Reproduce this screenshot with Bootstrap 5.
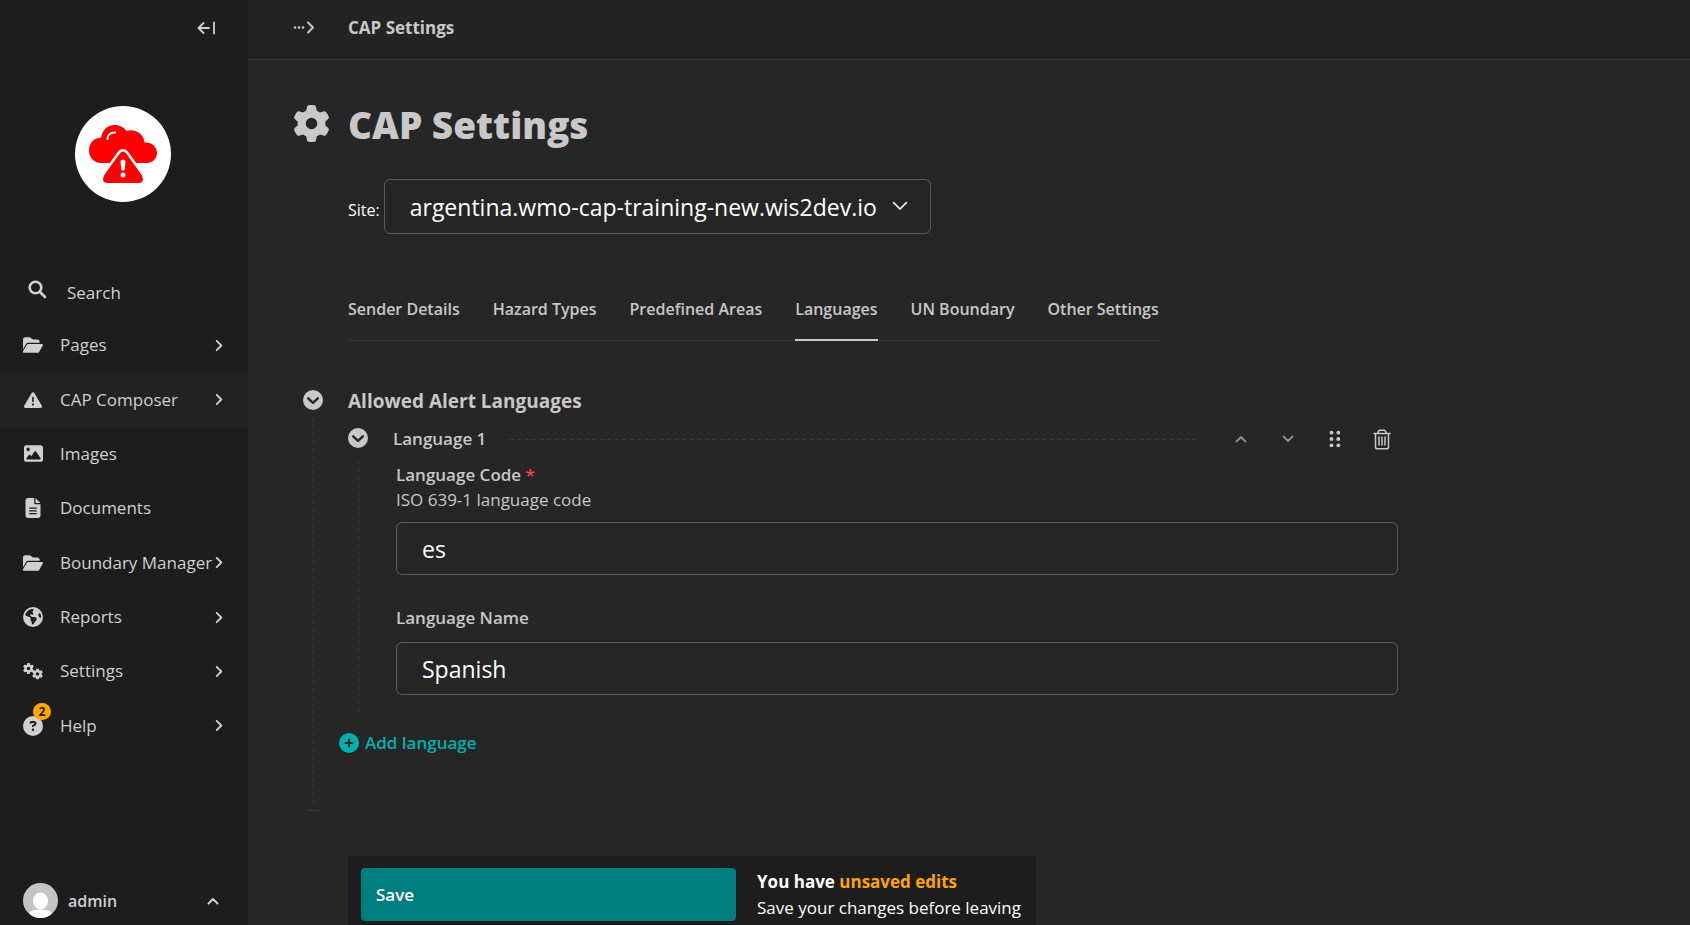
<!DOCTYPE html>
<html lang="en" data-bs-theme="dark">
<head>
<meta charset="utf-8">
<meta name="viewport" content="width=device-width, initial-scale=1">
<title>CAP Settings</title>
<link href="https://cdn.jsdelivr.net/npm/bootstrap@5.3.0/dist/css/bootstrap.min.css" rel="stylesheet">
<style>
  :root { --ink: #c8c8c8; --line: #333; --dash: #363636; --field: #5c5c5c; --panel: #1d1d1d; --teal: #007d7e; --teal-light: #00b0b1; --warn: #ffa500; }
  body { background: #262626; color: var(--ink); font-family: "Segoe UI", "Open Sans", "Noto Sans", sans-serif; font-size: 17px; line-height: 24px; }
  a, a:hover { color: inherit; text-decoration: none; }
  h1, h2, h3 { color: inherit; }
  svg { fill: currentColor; display: block; flex-shrink: 0; }
  .stroked { fill: none; stroke: currentColor; stroke-linecap: round; stroke-linejoin: round; }
  .bare { background: none; border: 0; padding: 0; color: inherit; }

  .side { width: 248px; background: var(--panel); color: #d0d0d0; }
  .side-top { height: 56px; padding-right: 31px; }
  .brand { width: 96px; height: 96px; margin: 50px 0 0 75px; }
  .side-search { margin-top: 66px; height: 50px; padding-left: 28px; gap: 20px; }
  .side-search svg { margin-bottom: 8px; }
  .side-menu { min-height: 435px; }
  .side-menu a { padding: 0 25px 0 22px; gap: 16px; height: 100%; white-space: nowrap; }
  .side-menu a > span { min-width: 0; }
  .side-menu .glyph { width: 22px; flex-shrink: 0; }
  .side-menu .has-sub { margin-right: -16px; }
  .side-menu .chosen { background: #222; }
  .count { top: -13px; left: 11px; width: 18px; height: 17px; font-size: 12px; line-height: 17px; background: var(--warn); color: #1d1d1d; border-radius: 9px; font-weight: 700; text-align: center; }
  .side-user { padding: 0 29px 7px 23px; gap: 10px; font-size: 16px; }

  .topbar { height: 60px; background: #232323; border-bottom: 1px solid var(--line); padding: 0 45px 4px; gap: 33px; }
  .page-body { padding: 0 45px; }
  .page-title { margin-top: 43px; gap: 18px; }
  .page-title svg { margin-bottom: 4px; }
  .page-title h1 { font-size: 37px; line-height: 44px; font-weight: 800; margin: 0; }
  .indent { margin-left: 55px; }
  .site-row { margin-top: 32px; gap: 4px; color: #fff; font-size: 16px; }
  .site-row label { padding-top: 6px; }
  .site-row select, .field { background-color: transparent; border: 1px solid var(--field); border-radius: 6px; color: #fff; font-size: 23px; line-height: 30px; padding: 11px 25px; }
  .site-row select { width: 547px; height: 55px; padding-right: 50px; appearance: none; cursor: pointer; }
  .site-row option { background: #262626; }
  .select-mark { right: 23px; top: 22px; pointer-events: none; }

  .tabs { margin-top: 58px; gap: 33px; border-bottom: 1px solid var(--line); width: max-content; font-size: 16px; font-weight: 600; }
  .tabs a { padding: 5px 0 18px; margin-bottom: -1px; border-bottom: 2px solid transparent; }
  .tabs a.on { border-color: var(--ink); }

  .block-tree { max-width: 1105px; margin-top: 49px; }
  .block-main { padding: 0 0 56px 25px; }
  .rail { width: 20px; margin-left: 10px; }
  .dash-v { width: 1px; background: repeating-linear-gradient(var(--dash) 0 4px, transparent 4px 7px, var(--dash) 7px 11px, transparent 11px 15px); }
  .dash-h { height: 1px; margin-left: 24px; background: repeating-linear-gradient(90deg, var(--dash) 0 4px, transparent 4px 7px, var(--dash) 7px 11px, transparent 11px 15px); }
  .rail-end { width: 12px; height: 1px; background: #3a3a3a; margin-top: 6px; }
  .block-title { font-size: 19px; line-height: 22px; font-weight: 700; margin: 0; }
  .child { margin-top: 16px; }
  .child-dash { margin-top: 13px; }
  .child-main { margin-left: 25px; margin-top: -1px; }
  .child-title { font-size: 17px; line-height: 24px; font-weight: 600; margin: 0; }
  .child-tools { padding: 0 6px 0 30px; gap: 27px; }
  .child-tools button { width: 20px; height: 24px; display: flex; align-items: center; justify-content: center; }
  .child-tools button:disabled { color: #8f8f8f; }
  .fields { margin: 11px 0 19px 3px; }
  .fields label { font-weight: 600; display: block; line-height: 25px; }
  .fields .hint { line-height: 25px; margin-bottom: 10px; }
  .fields .second { margin: 30px 0 12px; }
  .field { width: 100%; height: 53px; display: block; }
  .star { color: #f9474f; }
  .add-btn { color: var(--teal-light); font-weight: 600; gap: 6px; margin: 17px 0 0 -9px; }

  .save-bar { width: 688px; max-width: 100%; background: var(--panel); border-radius: 4px 4px 0 0; padding: 12px 13px 4px; gap: 21px; color: #fff; }
  .save-bar .save { flex: 0 0 375px; background: var(--teal); color: #fff; border-radius: 4px; height: 53px; padding: 0 15px; font-weight: 600; text-align: left; }
  .save-bar p { margin: 0; line-height: 26px; white-space: nowrap; }
  .warned { color: var(--warn); }
</style>
</head>
<body>
<svg width="0" height="0" class="position-absolute" aria-hidden="true">
  <symbol id="cog" viewBox="0 0 512 512"><path d="M495.9 166.6c3.2 8.7 .5 18.4-6.4 24.6l-43.3 39.4c1.1 8.3 1.7 16.8 1.7 25.4s-.6 17.1-1.7 25.4l43.3 39.4c6.9 6.2 9.6 15.9 6.4 24.6c-4.4 11.9-9.7 23.3-15.8 34.3l-4.7 8.1c-6.6 11-14 21.4-22.1 31.2c-5.900 7.2-15.7 9.6-24.5 6.8l-55.7-17.7c-13.4 10.3-28.2 18.9-44 25.4l-12.5 57.1c-2 9.1-9 16.3-18.2 17.8c-13.8 2.3-28 3.5-42.5 3.5s-28.7-1.2-42.5-3.5c-9.2-1.5-16.2-8.7-18.2-17.8l-12.5-57.1c-15.8-6.5-30.6-15.1-44-25.4L83.1 425.9c-8.8 2.8-18.6 .3-24.5-6.8c-8.1-9.8-15.5-20.2-22.1-31.2l-4.7-8.1c-6.1-11-11.4-22.4-15.8-34.3c-3.2-8.7-.5-18.4 6.4-24.6l43.3-39.4C64.6 273.1 64 264.6 64 256s.6-17.1 1.7-25.4L22.4 191.2c-6.9-6.2-9.6-15.9-6.4-24.6c4.4-11.9 9.7-23.3 15.8-34.3l4.7-8.1c6.6-11 14-21.4 22.1-31.2c5.9-7.2 15.7-9.6 24.5-6.8l55.7 17.7c13.4-10.3 28.2-18.9 44-25.4l12.5-57.1c2-9.1 9-16.3 18.2-17.8C227.3 1.2 241.5 0 256 0s28.7 1.2 42.5 3.5c9.2 1.5 16.2 8.7 18.2 17.8l12.5 57.1c15.8 6.5 30.6 15.1 44 25.4l55.7-17.7c8.8-2.8 18.6-.3 24.5 6.8c8.1 9.8 15.5 20.2 22.1 31.2l4.7 8.1c6.1 11 11.4 22.4 15.8 34.3zM256 336a80 80 0 1 0 0-160 80 80 0 1 0 0 160z"/></symbol>
  <symbol id="folder" viewBox="0 0 576 512"><path d="M88.7 223.8L0 375.8V96C0 60.7 28.7 32 64 32H181.5c17 0 33.3 6.7 45.3 18.7l26.5 26.5c12 12 28.3 18.7 45.3 18.7H416c35.3 0 64 28.7 64 64v32H144c-22.8 0-43.8 12.1-55.3 31.8zm27.6 16.1C122.1 230 132.6 224 144 224H544c11.5 0 22 6.1 27.7 16.1s5.7 22.2-.1 32.1l-112 192C453.9 474 443.4 480 432 480H32c-11.5 0-22-6.1-27.7-16.1s-5.7-22.2 .1-32.1l112-192z"/></symbol>
  <symbol id="next" viewBox="0 0 8 14"><path d="M1.500 2L6.500 7L1.500 12" fill="none" stroke="currentColor" stroke-width="2" stroke-linecap="round" stroke-linejoin="round"/></symbol>
  <symbol id="toggle" viewBox="0 0 20 20"><circle cx="10" cy="10" r="10"/><path d="M5.200 8.300L10 12.800L14.800 8.300" fill="none" stroke="#262626" stroke-width="2.400" stroke-linecap="round" stroke-linejoin="round"/></symbol>
</svg>

<div class="d-flex min-vh-100">
  <aside class="side d-flex flex-column flex-shrink-0 vh-100 sticky-top">
    <div class="side-top d-flex align-items-center justify-content-end">
      <button class="bare" type="button" aria-label="Collapse menu"><svg class="stroked" width="20" height="14" viewBox="0 0 20 14" stroke-width="1.800"><path d="M12 7H2M6.500 2L1.500 7L6.500 12M17 1.500V12.500"/></svg></button>
    </div>
    <a class="brand" href="#" aria-label="Dashboard">
      <svg width="96" height="96" viewBox="0 0 96 96">
        <circle cx="48" cy="48" r="48" fill="#fff"/>
        <path fill="#f00" d="M26 57C19 57 14 51 14 44.500C14 37 19 32 26 31.500C28 23 33 19 39.500 19C45 19 49 21.500 51.500 25C60 22 69 28 69.500 36.500C77 36 82 41 82 47C82 53 77 57 72 57Z"/>
        <path d="M32.500 33C32.500 29 35.500 26.500 40 26.500" fill="none" stroke="#fff" stroke-width="2" stroke-linecap="round"/>
        <path d="M44 48.500Q48 42.500 52 48.500L67 69.500Q70 77 63.500 77H32.500Q26 77 29 69.500Z" fill="#f00" stroke="#fff" stroke-width="5"/>
        <path d="M44 48.500Q48 42.500 52 48.500L67 69.500Q70 77 63.500 77H32.500Q26 77 29 69.500Z" fill="#f00"/>
        <path d="M45.500 55Q48 52 50.500 55L49.800 63.500Q48 66 46.200 63.500Z" fill="#fff"/><circle cx="48" cy="69" r="2.500" fill="#fff"/>
      </svg>
    </a>
    <a class="side-search d-flex align-items-center" href="#">
      <svg class="stroked" width="19" height="19" viewBox="0 0 19 19" stroke-width="2.600"><circle cx="7.500" cy="7.500" r="5.800"/><path d="M12 12L17 17"/></svg>
      <span>Search</span>
    </a>
    <ul class="side-menu list-unstyled d-flex flex-column mb-0">
      <li class="flex-fill"><a class="d-flex align-items-center" href="#"><span class="glyph"><svg class="mx-auto" width="20" height="18"><use href="#folder"/></svg></span><span class="flex-grow-1 has-sub">Pages</span><svg width="8" height="13"><use href="#next"/></svg></a></li>
      <li class="flex-fill chosen"><a class="d-flex align-items-center" href="#"><span class="glyph"><svg class="mx-auto" width="18" height="18" viewBox="0 0 512 512"><path d="M256 32c14.200 0 27.300 7.500 34.500 19.800l216 368c7.300 12.400 7.300 27.700 .2 40.100S486.300 480 472 480H40c-14.300 0-27.600-7.700-34.700-20.100s-7-27.800 .2-40.100l216-368C228.700 39.500 241.800 32 256 32zm0 128c-13.300 0-24 10.700-24 24V296c0 13.300 10.700 24 24 24s24-10.700 24-24V184c0-13.300-10.700-24-24-24zm32 224a32 32 0 1 0 -64 0 32 32 0 1 0 64 0z"/></svg></span><span class="flex-grow-1 has-sub">CAP Composer</span><svg width="8" height="13"><use href="#next"/></svg></a></li>
      <li class="flex-fill"><a class="d-flex align-items-center" href="#"><span class="glyph"><svg class="mx-auto" width="19" height="19" viewBox="0 0 512 512"><path d="M0 96C0 60.700 28.700 32 64 32H448c35.300 0 64 28.700 64 64V416c0 35.300-28.700 64-64 64H64c-35.300 0-64-28.700-64-64V96zM323.800 202.500c-4.500-6.600-11.900-10.500-19.800-10.500s-15.400 3.900-19.800 10.500l-87 127.600L170.700 297c-4.600-5.700-11.500-9-18.700-9s-14.200 3.300-18.700 9l-64 80c-5.800 7.200-6.900 17.100-2.900 25.400s12.400 13.600 21.600 13.600h96 32H424c8.900 0 17.100-4.900 21.200-12.800s3.600-17.400-1.400-24.700l-120-176zM112 192a48 48 0 1 0 0-96 48 48 0 1 0 0 96z"/></svg></span><span>Images</span></a></li>
      <li class="flex-fill"><a class="d-flex align-items-center" href="#"><span class="glyph"><svg class="mx-auto" width="16" height="20" viewBox="0 0 384 512" fill-rule="evenodd"><path d="M64 0C28.700 0 0 28.700 0 64V448c0 35.300 28.700 64 64 64H320c35.300 0 64-28.700 64-64V160H256c-17.700 0-32-14.300-32-32V0H64zM256 0V128H384L256 0zM96 240H288V272H96zM96 312H288V344H96zM96 384H288V416H96z"/></svg></span><span>Documents</span></a></li>
      <li class="flex-fill"><a class="d-flex align-items-center" href="#"><span class="glyph"><svg class="mx-auto" width="20" height="18"><use href="#folder"/></svg></span><span class="flex-grow-1 has-sub">Boundary Manager</span><svg width="8" height="13"><use href="#next"/></svg></a></li>
      <li class="flex-fill"><a class="d-flex align-items-center" href="#"><span class="glyph"><svg class="mx-auto" width="20" height="20" viewBox="0 0 512 512" fill-rule="evenodd"><path d="M57.700 193l9.400 16.400c8.300 14.500 21.900 25.200 38 29.800L163 255.700c17.200 4.900 29 20.600 29 38.500v39.900c0 11 6.200 21 16 25.900s16 14.900 16 25.900v39c0 15.600 14.900 26.900 29.900 22.600c16.100-4.600 28.600-17.500 32.700-33.800l2.800-11.200c4.200-16.900 15.200-31.400 30.300-40l8.100-4.600c15-8.500 24.200-24.500 24.200-41.700v-8.300c0-12.700-5.100-24.900-14.100-33.900l-3.900-3.900c-9-9-21.200-14.100-33.900-14.100H257c-11.100 0-22.100-2.900-31.800-8.400l-34.500-19.700c-4.300-2.500-7.600-6.500-9.200-11.200c-3.200-9.600 1.100-20 10.200-24.500l5.900-3c6.600-3.300 14.300-3.900 21.300-1.500l23.200 7.700c8.200 2.700 17.200-.4 21.900-7.500c4.700-7 4.200-16.300-1.200-22.800l-13.600-16.300c-10-12-9.900-29.500 .3-41.300l15.700-18.300c8.800-10.300 10.200-25 3.500-36.700l-2.400-4.200c-3.500-.2-6.900-.3-10.400-.3C163.100 48 84.400 108.900 57.700 193zM464 256c0-36.800-9.600-71.400-26.400-101.500L412 164.800c-15.700 6.300-23.800 23.800-18.500 39.800l16.900 50.700c3.500 10.400 12 18.300 22.600 20.900l29.100 7.300c1.200-9 1.800-18.200 1.800-27.500zM0 256a256 256 0 1 1 512 0A256 256 0 1 1 0 256z"/></svg></span><span class="flex-grow-1 has-sub">Reports</span><svg width="8" height="13"><use href="#next"/></svg></a></li>
      <li class="flex-fill"><a class="d-flex align-items-center" href="#"><span class="glyph"><svg class="mx-auto" width="20" height="17" viewBox="0 0 20 17"><use href="#cog" x="0" y="0" width="11" height="11"/><use href="#cog" x="9" y="5.500" width="11" height="11"/></svg></span><span class="flex-grow-1 has-sub">Settings</span><svg width="8" height="13"><use href="#next"/></svg></a></li>
      <li class="flex-fill"><a class="d-flex align-items-center" href="#"><span class="glyph position-relative"><svg class="mx-auto" width="20" height="20" viewBox="0 0 512 512"><path d="M256 512A256 256 0 1 0 256 0a256 256 0 1 0 0 512zM169.800 165.300c7.900-22.300 29.100-37.300 52.800-37.300h58.300c34.900 0 63.100 28.300 63.100 63.100c0 22.600-12.100 43.500-31.700 54.800L280 264.400c-.2 13-10.900 23.600-24 23.600c-13.300 0-24-10.700-24-24V250.500c0-8.600 4.600-16.500 12.100-20.800l44.300-25.400c4.700-2.700 7.600-7.700 7.600-13.100c0-8.400-6.800-15.100-15.100-15.100H222.600c-3.400 0-6.400 2.100-7.500 5.300l-.4 1.200c-4.400 12.500-18.200 19-30.700 14.600s-19-18.200-14.600-30.700l.4-1.200zM224 352a32 32 0 1 1 64 0 32 32 0 1 1 -64 0z"/></svg><span class="count position-absolute">2</span></span><span class="flex-grow-1 has-sub">Help</span><svg width="8" height="13"><use href="#next"/></svg></a></li>
    </ul>
    <button class="side-user bare d-flex align-items-center mt-auto" type="button">
      <svg width="35" height="35" viewBox="0 0 35 35"><circle cx="17.500" cy="17.500" r="17.500" fill="#c4c4c4"/><ellipse cx="17.500" cy="18" rx="7.500" ry="8.500" fill="#fff"/><path d="M6 30.500Q8 26.500 17.500 26.500T29 30.500Q24 35 17.500 35T6 30.500Z" fill="#fff"/></svg>
      <span class="flex-grow-1 text-start fw-semibold">admin</span>
      <svg class="stroked" width="12" height="8" viewBox="0 0 12 8" stroke-width="1.800"><path d="M1.500 6.500L6 2L10.500 6.500"/></svg>
    </button>
  </aside>

  <div class="flex-grow-1 d-flex flex-column">
    <header class="topbar d-flex align-items-center">
      <button class="bare" type="button" aria-label="Show breadcrumbs"><svg width="22" height="14" viewBox="0 0 22 14"><circle cx="2" cy="6.500" r="1.300"/><circle cx="6" cy="6.500" r="1.300"/><circle cx="10" cy="6.500" r="1.300"/><path class="stroked" stroke-width="2" d="M15 1.500L20 6.500L15 11.500"/></svg></button>
      <a class="fw-bold" href="#">CAP Settings</a>
    </header>

    <main class="page-body flex-grow-1 d-flex flex-column">
      <div class="page-title d-flex align-items-center">
        <svg width="37" height="37"><use href="#cog"/></svg>
        <h1>CAP Settings</h1>
      </div>

      <div class="site-row indent d-flex align-items-center">
        <label for="site">Site:</label>
        <div class="position-relative">
          <select id="site"><option>argentina.wmo-cap-training-new.wis2dev.io</option></select>
          <svg class="select-mark stroked position-absolute" width="16" height="10" viewBox="0 0 16 10" stroke-width="1.600"><path d="M1.500 1.500L8 8L14.500 1.500"/></svg>
        </div>
      </div>

      <nav class="tabs indent d-flex">
        <a href="#">Sender Details</a>
        <a href="#">Hazard Types</a>
        <a href="#">Predefined Areas</a>
        <a class="on" href="#" aria-current="page">Languages</a>
        <a href="#">UN Boundary</a>
        <a href="#">Other Settings</a>
      </nav>

      <section class="block-tree d-flex">
        <div class="rail d-flex flex-column align-items-center flex-shrink-0">
          <button class="bare" type="button" aria-label="Toggle section"><svg width="20" height="20"><use href="#toggle"/></svg></button>
          <span class="dash-v flex-grow-1 mt-2"></span>
          <span class="rail-end"></span>
        </div>
        <div class="block-main flex-grow-1">
          <h2 class="block-title">Allowed Alert Languages</h2>
          <div class="child d-flex">
            <div class="d-flex flex-column align-items-center flex-shrink-0">
              <button class="bare" type="button" aria-label="Toggle language"><svg width="20" height="20"><use href="#toggle"/></svg></button>
              <span class="dash-v flex-grow-1 child-dash"></span>
            </div>
            <div class="child-main flex-grow-1">
              <div class="d-flex align-items-center">
                <h3 class="child-title">Language 1</h3>
                <span class="dash-h flex-grow-1"></span>
                <div class="child-tools d-flex">
                  <button class="bare" type="button" disabled aria-label="Move up"><svg class="stroked" width="12" height="8" viewBox="0 0 12 8" stroke-width="1.800"><path d="M1.500 6.500L6 2L10.500 6.500"/></svg></button>
                  <button class="bare" type="button" disabled aria-label="Move down"><svg class="stroked" width="12" height="8" viewBox="0 0 12 8" stroke-width="1.800"><path d="M1.500 1.500L6 6L10.500 1.500"/></svg></button>
                  <button class="bare" type="button" aria-label="Drag"><svg width="12" height="18" viewBox="0 0 12 18"><circle cx="2.500" cy="2.700" r="1.900"/><circle cx="9.300" cy="2.700" r="1.900"/><circle cx="2.500" cy="9" r="1.900"/><circle cx="9.300" cy="9" r="1.900"/><circle cx="2.500" cy="15.300" r="1.900"/><circle cx="9.300" cy="15.300" r="1.900"/></svg></button>
                  <button class="bare" type="button" aria-label="Delete"><svg class="stroked" width="18" height="21" viewBox="0 0 18 21" stroke-width="1.500"><path d="M1 4.500H17M5 4Q5.500 1.300 7 1.300H11Q12.500 1.300 13 4M2.500 4.500V18Q2.500 19.800 4.500 19.800H13.500Q15.500 19.800 15.500 18V4.500M6 8V16M9 8V16M12 8V16"/></svg></button>
                </div>
              </div>
              <div class="fields">
                <label for="code">Language Code <span class="star">*</span></label>
                <div class="hint" id="code-hint">ISO 639-1 language code</div>
                <input class="field" id="code" type="text" value="es" aria-describedby="code-hint">
                <label class="second" for="name">Language Name</label>
                <input class="field" id="name" type="text" value="Spanish">
              </div>
            </div>
          </div>
          <button class="add-btn bare d-flex align-items-center" type="button"><svg width="20" height="20" viewBox="0 0 20 20"><circle cx="10" cy="10" r="10"/><path d="M10 6.500V13.500M6.500 10H13.500" stroke="#262626" stroke-width="2" stroke-linecap="round"/></svg>Add language</button>
        </div>
      </section>

      <footer class="save-bar indent d-flex align-items-center mt-auto sticky-bottom">
        <button class="save bare" type="button">Save</button>
        <div>
          <p class="fw-bold">You have <span class="warned">unsaved edits</span></p>
          <p>Save your changes before leaving</p>
        </div>
      </footer>
    </main>
  </div>
</div>
<script src="https://cdn.jsdelivr.net/npm/bootstrap@5.3.0/dist/js/bootstrap.bundle.min.js"></script>
</body>
</html>
